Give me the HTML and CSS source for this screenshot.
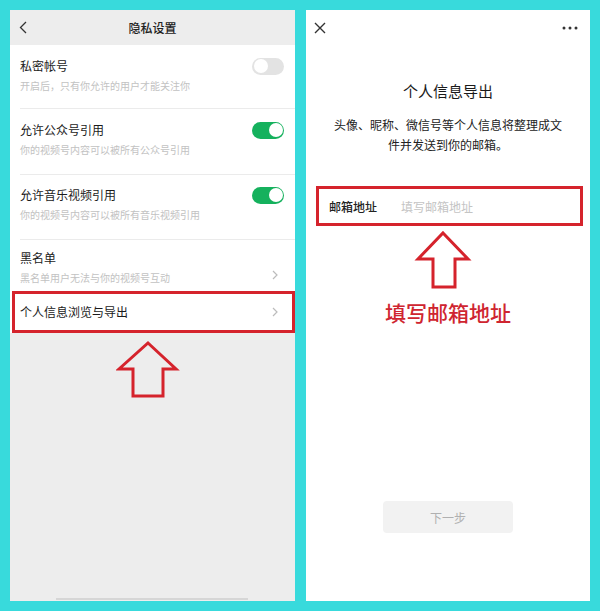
FILE: index.html
```html
<!DOCTYPE html>
<html lang="zh-CN">
<head>
<meta charset="UTF-8">
<meta name="viewport" content="width=device-width, initial-scale=1.0">
<title>个人信息导出</title>
<link rel="stylesheet" href="styles.css">
</head>
<body>

<div class="screens">

  <div class="phone left">
    <div class="header">
      <svg class="back" width="8" height="13" viewBox="0 0 8 13"><polyline points="7,1 1.5,6.5 7,12" fill="none" stroke="#333" stroke-width="1.3"/></svg>
      <span class="header-title">隐私设置</span>
    </div>

    <div class="list">
      <div class="row row-1">
        <div class="row-top">
          <span class="row-title">私密帐号</span>
          <span class="toggle"></span>
        </div>
        <div class="row-sub">开启后，只有你允许的用户才能关注你</div>
      </div>
      <div class="row row-2">
        <div class="row-top">
          <span class="row-title">允许公众号引用</span>
          <span class="toggle on"></span>
        </div>
        <div class="row-sub">你的视频号内容可以被所有公众号引用</div>
      </div>
      <div class="row row-3">
        <div class="row-top">
          <span class="row-title">允许音乐视频引用</span>
          <span class="toggle on"></span>
        </div>
        <div class="row-sub">你的视频号内容可以被所有音乐视频引用</div>
      </div>
      <div class="row row-4">
        <div class="row-text">
          <div class="row-title">黑名单</div>
          <div class="row-sub">黑名单用户无法与你的视频号互动</div>
        </div>
        <svg class="chev" width="6" height="10" viewBox="0 0 6 10"><polyline points="1,1 5,5 1,9" fill="none" stroke="#bcbcbc" stroke-width="1.2"/></svg>
      </div>
      <div class="row-mark">
        <span class="row-title">个人信息浏览与导出</span>
        <svg class="chev" width="6" height="10" viewBox="0 0 6 10"><polyline points="1,1 5,5 1,9" fill="none" stroke="#bcbcbc" stroke-width="1.2"/></svg>
      </div>
    </div>

    <svg class="arrow arrow-left" width="64" height="60" viewBox="0 0 64 60"><polygon points="32,3 60,29 47,29 47,56 17,56 17,29 3,29" fill="none" stroke="#d5232c" stroke-width="3" stroke-linejoin="miter"/></svg>

    <div class="home-bar"></div>
  </div>

  <div class="phone right">
    <div class="topbar">
      <svg width="12" height="12" viewBox="0 0 12 12"><path d="M1 1 L11 11 M11 1 L1 11" stroke="#333" stroke-width="1.4"/></svg>
      <svg width="16" height="4" viewBox="0 0 16 4"><circle cx="2" cy="2" r="1.5" fill="#333"/><circle cx="8" cy="2" r="1.5" fill="#333"/><circle cx="14" cy="2" r="1.5" fill="#333"/></svg>
    </div>

    <div class="export-title">个人信息导出</div>
    <div class="export-desc">头像、昵称、微信号等个人信息将整理成文件并发送到你的邮箱。</div>

    <div class="email-box">
      <span class="email-label">邮箱地址</span>
      <span class="email-input">填写邮箱地址</span>
    </div>

    <svg class="arrow arrow-right" width="58" height="60" viewBox="0 0 58 60"><polygon points="29,3 54,29 41,29 41,57 19,57 19,29 4,29" fill="none" stroke="#d5232c" stroke-width="3" stroke-linejoin="miter"/></svg>

    <div class="hint">填写邮箱地址</div>

    <div class="next-btn">下一步</div>
  </div>

</div>

</body>
</html>
```

FILE: styles.css
```css
body {
  margin: 0;
  background-color: #38dadc;
  font-family: "Noto Sans CJK SC", "Noto Sans", sans-serif;
  color: #1b1b1b;
}

.screens {
  display: flex;
  gap: 11px;
  padding: 10px 0 10px 10px;
}

.phone {
  height: 591px;
  display: flex;
  flex-direction: column;
}

/* left screen */
.left {
  width: 285px;
  background-color: #ededed;
}

.header {
  height: 35px;
  display: flex;
  align-items: center;
  justify-content: center;
  position: relative;
}

.back {
  position: absolute;
  left: 9px;
  top: 11px;
}

.header-title {
  font-size: 12px;
  font-weight: 500;
  color: #222;
}

.list {
  background-color: #fff;
}

.row {
  margin-left: 10px;
  padding-right: 11px;
  border-bottom: 1px solid #ebebeb;
  box-sizing: border-box;
}

.row-1 { height: 64px; padding-top: 13px; }
.row-2 { height: 66px; padding-top: 13px; }
.row-3 { height: 65px; padding-top: 12px; }

.row-4 {
  height: 51px;
  padding-top: 10px;
  border-bottom: none;
  display: flex;
  justify-content: space-between;
  align-items: flex-start;
}

.row-4 .chev {
  margin-top: 20px;
  margin-right: 6px;
}

.row-top {
  display: flex;
  justify-content: space-between;
  align-items: center;
  height: 16px;
}

.row-title {
  font-size: 12px;
  line-height: 16px;
}

.row-sub {
  margin-top: 4px;
  font-size: 10px;
  line-height: 16px;
  color: #c2c2c2;
}

.toggle {
  width: 32px;
  height: 17px;
  border-radius: 9px;
  background-color: #e3e3e3;
  box-sizing: border-box;
  position: relative;
}

.toggle::after {
  content: "";
  position: absolute;
  top: 1.5px;
  left: 1.5px;
  width: 14px;
  height: 14px;
  border-radius: 50%;
  background-color: #fff;
}

.toggle.on {
  background-color: #15b15d;
}

.toggle.on::after {
  left: 16.5px;
}

.row-mark {
  height: 42px;
  margin-left: 2px;
  border: 3px solid #d5232c;
  box-sizing: border-box;
  padding: 0 14px 0 5px;
  display: flex;
  justify-content: space-between;
  align-items: center;
}

.arrow-left {
  margin-top: 7px;
  margin-left: 106px;
}

.home-bar {
  margin: auto 0 1px 46px;
  width: 192px;
  height: 2px;
  background-color: #d6d6d6;
}

/* right screen */
.right {
  width: 284px;
  background-color: #fff;
  align-items: center;
}

.topbar {
  align-self: stretch;
  height: 36px;
  display: flex;
  justify-content: space-between;
  align-items: center;
  padding: 0 12px 0 8px;
}

.export-title {
  margin-top: 35px;
  font-size: 15px;
  line-height: 20px;
  color: #1a1a1a;
}

.export-desc {
  margin-top: 14px;
  width: 232px;
  font-size: 12px;
  line-height: 20px;
  text-align: center;
  color: #222;
}

.email-box {
  align-self: flex-start;
  margin: 31px 0 0 10px;
  width: 267px;
  height: 40px;
  border: 3px solid #d5232c;
  box-sizing: border-box;
  padding-left: 10px;
  display: flex;
  align-items: center;
  gap: 24px;
  font-size: 12px;
}

.email-label {
  font-weight: 500;
  color: #222;
}

.email-input {
  color: #c4c4c4;
}

.arrow-right {
  align-self: flex-start;
  margin: 4px 0 0 108px;
}

.hint {
  margin-top: 9px;
  font-size: 21px;
  line-height: 26px;
  color: #cf2530;
  font-weight: 500;
}

.next-btn {
  margin-top: 176px;
  width: 130px;
  height: 32px;
  border-radius: 4px;
  background-color: #f2f2f2;
  color: #b0b0b0;
  font-size: 12px;
  display: flex;
  align-items: center;
  justify-content: center;
}
```
